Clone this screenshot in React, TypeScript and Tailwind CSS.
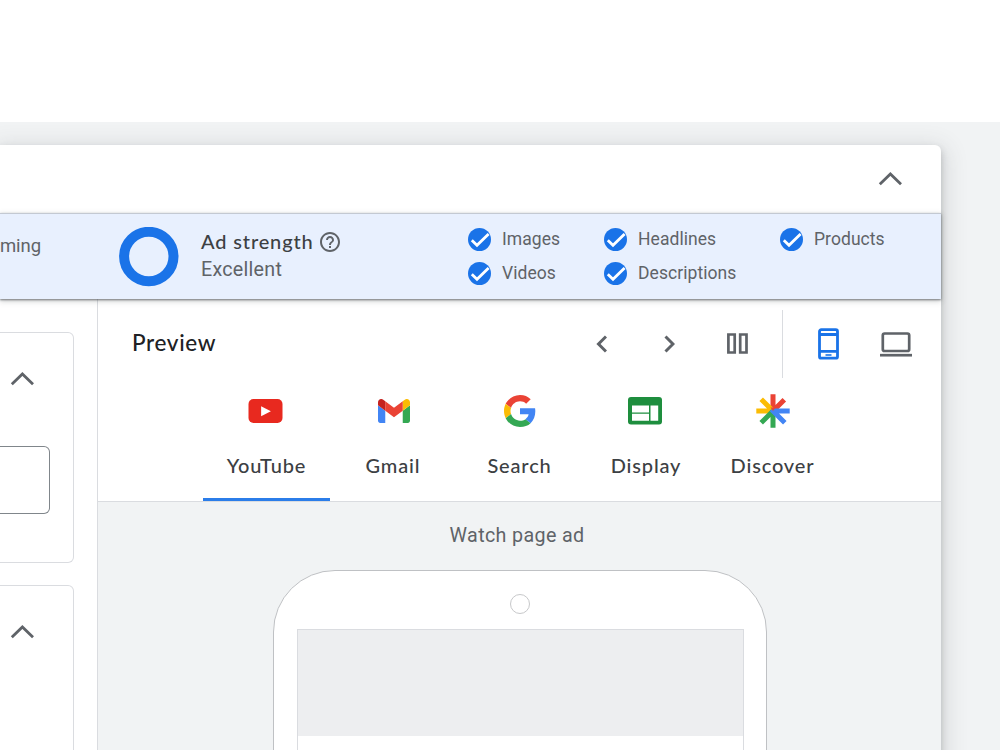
import type { ReactNode } from "react";

const sans = "font-['Lato','Roboto',sans-serif] font-medium";

function ChevronUp() {
  return (
    <svg width="24" height="14" viewBox="0 0 24 14" fill="none" stroke="#5f6368" strokeWidth="2.8">
      <path d="M1.8 12.3 12.4 2 23 12.3" />
    </svg>
  );
}

function CheckItem({ label }: { label: string }) {
  return (
    <div className="flex h-[33.5px] items-center">
      <svg width="23" height="23" viewBox="0 0 23 23" fill="none" className="shrink-0">
        <circle cx="11.5" cy="11.5" r="11.5" fill="#1a73e8" />
        <path d="M3.8 12.3 9 17.3 20.6 6" stroke="#fff" strokeWidth="2.8" />
      </svg>
      <span className="-mt-px ml-[11px] text-[17.5px] leading-[24px] tracking-[0.06px] text-[#5f6368]">{label}</span>
    </div>
  );
}

function YouTubeIcon() {
  return (
    <svg width="35" height="34" viewBox="0 0 34 34" className="mr-[2px]">
      <rect x="0" y="5" width="34" height="24" rx="5" fill="#e8291f" />
      <path d="M12.6 12.2v10l9.8-5z" fill="#fff" />
    </svg>
  );
}

function GmailIcon() {
  return (
    <svg width="32" height="24" viewBox="52 42 88 66" className="ml-[2px]">
      <path fill="#4285f4" d="M58 108h14V74L52 59v43c0 3.32 2.69 6 6 6" />
      <path fill="#34a853" d="M120 108h14c3.32 0 6-2.69 6-6V59l-20 15" />
      <path fill="#fbbc04" d="M120 48v26l20-15v-8c0-7.42-8.47-11.65-14.4-7.2" />
      <path fill="#ea4335" d="M72 74V48l24 18 24-18v26L96 92" />
      <path fill="#c5221f" d="M52 51v8l20 15V48l-5.6-4.2c-5.94-4.45-14.4-.22-14.4 7.2" />
    </svg>
  );
}

function GoogleIcon() {
  return (
    <svg width="32" height="32" viewBox="0 0 48 48" className="ml-px">
      <path fill="#EA4335" d="M24 9.5c3.54 0 6.71 1.22 9.21 3.6l6.85-6.85C35.9 2.38 30.47 0 24 0 14.62 0 6.51 5.38 2.56 13.22l7.98 6.19C12.43 13.72 17.74 9.5 24 9.5z" />
      <path fill="#4285F4" d="M46.98 24.55c0-1.57-.15-3.09-.38-4.55H24v9.02h12.94c-.58 2.96-2.26 5.48-4.78 7.18l7.73 6c4.51-4.18 7.09-10.36 7.09-17.65z" />
      <path fill="#FBBC05" d="M10.53 28.59c-.48-1.45-.76-2.99-.76-4.59s.27-3.14.76-4.59l-7.98-6.19C.92 16.46 0 20.12 0 24c0 3.88.92 7.54 2.56 10.78l7.97-6.19z" />
      <path fill="#34A853" d="M24 48c6.48 0 11.93-2.13 15.89-5.81l-7.73-6c-2.15 1.45-4.92 2.3-8.16 2.3-6.26 0-11.57-4.22-13.47-9.91l-7.98 6.19C6.51 42.62 14.62 48 24 48z" />
    </svg>
  );
}

function DisplayIcon() {
  return (
    <svg width="34" height="28" viewBox="0 0 34 28" className="mr-[2px]">
      <rect width="34" height="27.5" rx="3" fill="#1e8e3e" />
      <path d="M4 8.5h17v6.9H4zM4 16.8h17v7H4zM22.5 8.5h7.7v15.3h-7.7z" fill="#fff" />
    </svg>
  );
}

function DiscoverIcon() {
  return (
    <svg width="34" height="34" viewBox="0 0 34 34" fill="none" strokeWidth="5" className="ml-px">
      <path d="M17 17V.3M17 17 28.3 5.7" stroke="#ea4335" />
      <path d="M17 17H.3M17 17 5.2 5.2" stroke="#fbbc04" />
      <path d="M17 17v16.7M17 17 5.2 28.8" stroke="#34a853" />
      <path d="M17 17h16.7M15.5 15.5l13.3 13.3" stroke="#4285f4" />
      <path d="M14.5 13.5h5L17 17z" fill="#ea4335" />
    </svg>
  );
}

function Tab({ label, icon, active }: { label: string; icon: ReactNode; active?: boolean }) {
  return (
    <div className="flex h-full w-[126.5px] flex-col items-center">
      <div className="mt-[16px] flex h-[34px] items-center">{icon}</div>
      <span className={`mt-[23px] text-[20px] leading-[28px] tracking-[0.85px] text-[#3c4043] ${sans}`}>{label}</span>
      <div className={`mt-auto h-[3px] w-full ${active ? "bg-[#2b7de9]" : "bg-transparent"}`} />
    </div>
  );
}

function Tool({ children }: { children: ReactNode }) {
  return <div className="flex h-[67px] w-[67.5px] items-center justify-center">{children}</div>;
}

export default function App() {
  return (
    <div className="flex h-[750px] w-[1000px] flex-col overflow-hidden bg-white font-['Roboto',sans-serif]">
      <div className="h-[122px] shrink-0" />
      <div className="flex-1 overflow-hidden bg-[#f1f3f4] pt-[23px]">
        <div className="h-[640px] w-[941px] rounded-tr-[6px] bg-white shadow-[0_4px_7px_rgba(60,64,67,0.28),0_6px_22px_6px_rgba(60,64,67,0.13)]">
          <div className="flex h-[68px] items-center justify-end pr-[39px]">
            <ChevronUp />
          </div>

          <div className="relative z-10 flex h-[86px] border-t border-[#c3c9d2] bg-[#e8f0fe] shadow-[0_1px_2px_rgba(60,64,67,0.65),0_2px_6px_rgba(60,64,67,0.25)]">
            <div className="w-[119px] pt-[20px] text-[18.5px] leading-[24px] tracking-[-0.1px] text-[#5f6368]">ming</div>
            <svg className="mt-[13px] shrink-0" width="60" height="60" viewBox="0 0 60 60" fill="none" stroke="#1a73e8" strokeWidth="10">
              <circle cx="29.8" cy="29.5" r="24.7" />
            </svg>
            <div className="ml-[22px] w-[267px] pt-[14px]">
              <div className="flex h-[28px] items-center">
                <span className={`-mt-[3px] text-[20px] leading-[28px] tracking-[0.85px] text-[#3c4043] ${sans}`}>Ad strength</span>
                <svg className="ml-[6px]" width="20" height="20" viewBox="2 2 20 20" fill="#5f6368">
                  <path d="M11 18h2v-2h-2v2zm1-16C6.48 2 2 6.48 2 12s4.48 10 10 10 10-4.48 10-10S17.52 2 12 2zm0 18c-4.41 0-8-3.59-8-8s3.59-8 8-8 8 3.59 8 8-3.59 8-8 8zm0-14c-2.21 0-4 1.79-4 4h2c0-1.1.9-2 2-2s2 .9 2 2c0 2-3 1.75-3 5h2c0-2.25 3-2.5 3-5 0-2.21-1.79-4-4-4z" />
                </svg>
              </div>
              <div className="text-[19.7px] leading-[28px] tracking-[0.25px] text-[#5f6368]">Excellent</div>
            </div>
            <div className="flex pt-[9px]">
              <div className="w-[136px]">
                <CheckItem label="Images" />
                <CheckItem label="Videos" />
              </div>
              <div className="w-[176px]">
                <CheckItem label="Headlines" />
                <CheckItem label="Descriptions" />
              </div>
              <CheckItem label="Products" />
            </div>
          </div>

          <div className="flex h-[486px]">
            <div className="w-[97px] shrink-0 pt-[33px]">
              <div className="h-[231px] w-[74px] rounded-r-[6px] border border-l-0 border-[#dadce0] pt-[39px]">
                <div className="pl-[10px]"><ChevronUp /></div>
                <div className="mt-[60px] h-[68px] w-[50px] rounded-r-[6px] border border-l-0 border-[#80868b]" />
              </div>
              <div className="mt-[22px] h-[231px] w-[74px] rounded-r-[6px] border border-l-0 border-[#dadce0] pt-[39px]">
                <div className="pl-[10px]"><ChevronUp /></div>
              </div>
            </div>

            <div className="flex min-w-0 flex-1 flex-col border-l border-[#dadce0]">
              <div className="flex h-[79px] shrink-0 items-center pl-[34px] pr-[11px] pt-[10px]">
                <span className={`-mt-[2px] mr-auto text-[22.5px] leading-[28px] tracking-[0.65px] text-[#202124] ${sans}`}>Preview</span>
                <Tool>
                  <svg width="12" height="18" viewBox="0 0 12 18" fill="none" stroke="#5f6368" strokeWidth="3"><path d="M11 1.5 3.5 9l7.5 7.5" /></svg>
                </Tool>
                <Tool>
                  <svg width="12" height="18" viewBox="0 0 12 18" fill="none" stroke="#5f6368" strokeWidth="3"><path d="M2.5 1.5 10 9l-7.5 7.5" /></svg>
                </Tool>
                <Tool>
                  <svg width="21" height="21" viewBox="0 0 21 21" fill="none" stroke="#5f6368" strokeWidth="2.7" className="ml-[2px]"><path d="M1.4 1.5h6.3v18H1.4zM13.2 1.5h6.3v18h-6.3z" /></svg>
                </Tool>
                <div className="ml-[12px] mr-[12px] h-[68px] w-px bg-[#dadce0]" />
                <Tool>
                  <svg width="21" height="32" viewBox="0 0 21 32" fill="none" stroke="#1a73e8" strokeWidth="2.8">
                    <rect x="1.5" y="1.6" width="18" height="28.6" rx="1.8" />
                    <path d="M1.5 6.5h18M1.5 23.3h18" />
                    <path d="M7.5 27h6" strokeWidth="1.6" />
                  </svg>
                </Tool>
                <Tool>
                  <svg width="32" height="25" viewBox="0 0 32 25" fill="none" stroke="#5f6368" strokeWidth="2.7" className="mt-px">
                    <rect x="2.8" y="1.5" width="26.4" height="17.5" rx="1.8" />
                    <path d="M0 23.2h32" />
                  </svg>
                </Tool>
              </div>

              <div className="flex h-[124px] shrink-0 justify-center border-b border-[#dadce0]">
                <Tab label="YouTube" icon={<YouTubeIcon />} active />
                <Tab label="Gmail" icon={<GmailIcon />} />
                <Tab label="Search" icon={<GoogleIcon />} />
                <Tab label="Display" icon={<DisplayIcon />} />
                <Tab label="Discover" icon={<DiscoverIcon />} />
              </div>

              <div className="flex flex-1 flex-col items-center bg-[#f1f3f4] pt-[20px]">
                <div className="mr-[5px] text-[19.7px] leading-[28px] tracking-[0.35px] text-[#5f6368]">Watch page ad</div>
                <div className="ml-px mt-[20px] flex h-[400px] w-[494px] shrink-0 flex-col items-center rounded-t-[62px] border border-[#bfc1c4] bg-white pt-[23px]">
                  <div className="size-[20px] shrink-0 rounded-full border-[1.5px] border-[#c7c8ca]" />
                  <div className="mt-[15px] h-[340px] w-[447px] shrink-0 border border-[#dadce0]">
                    <div className="h-[106px] bg-[#edeef0]" />
                  </div>
                </div>
              </div>
            </div>
          </div>
        </div>
      </div>
    </div>
  );
}
